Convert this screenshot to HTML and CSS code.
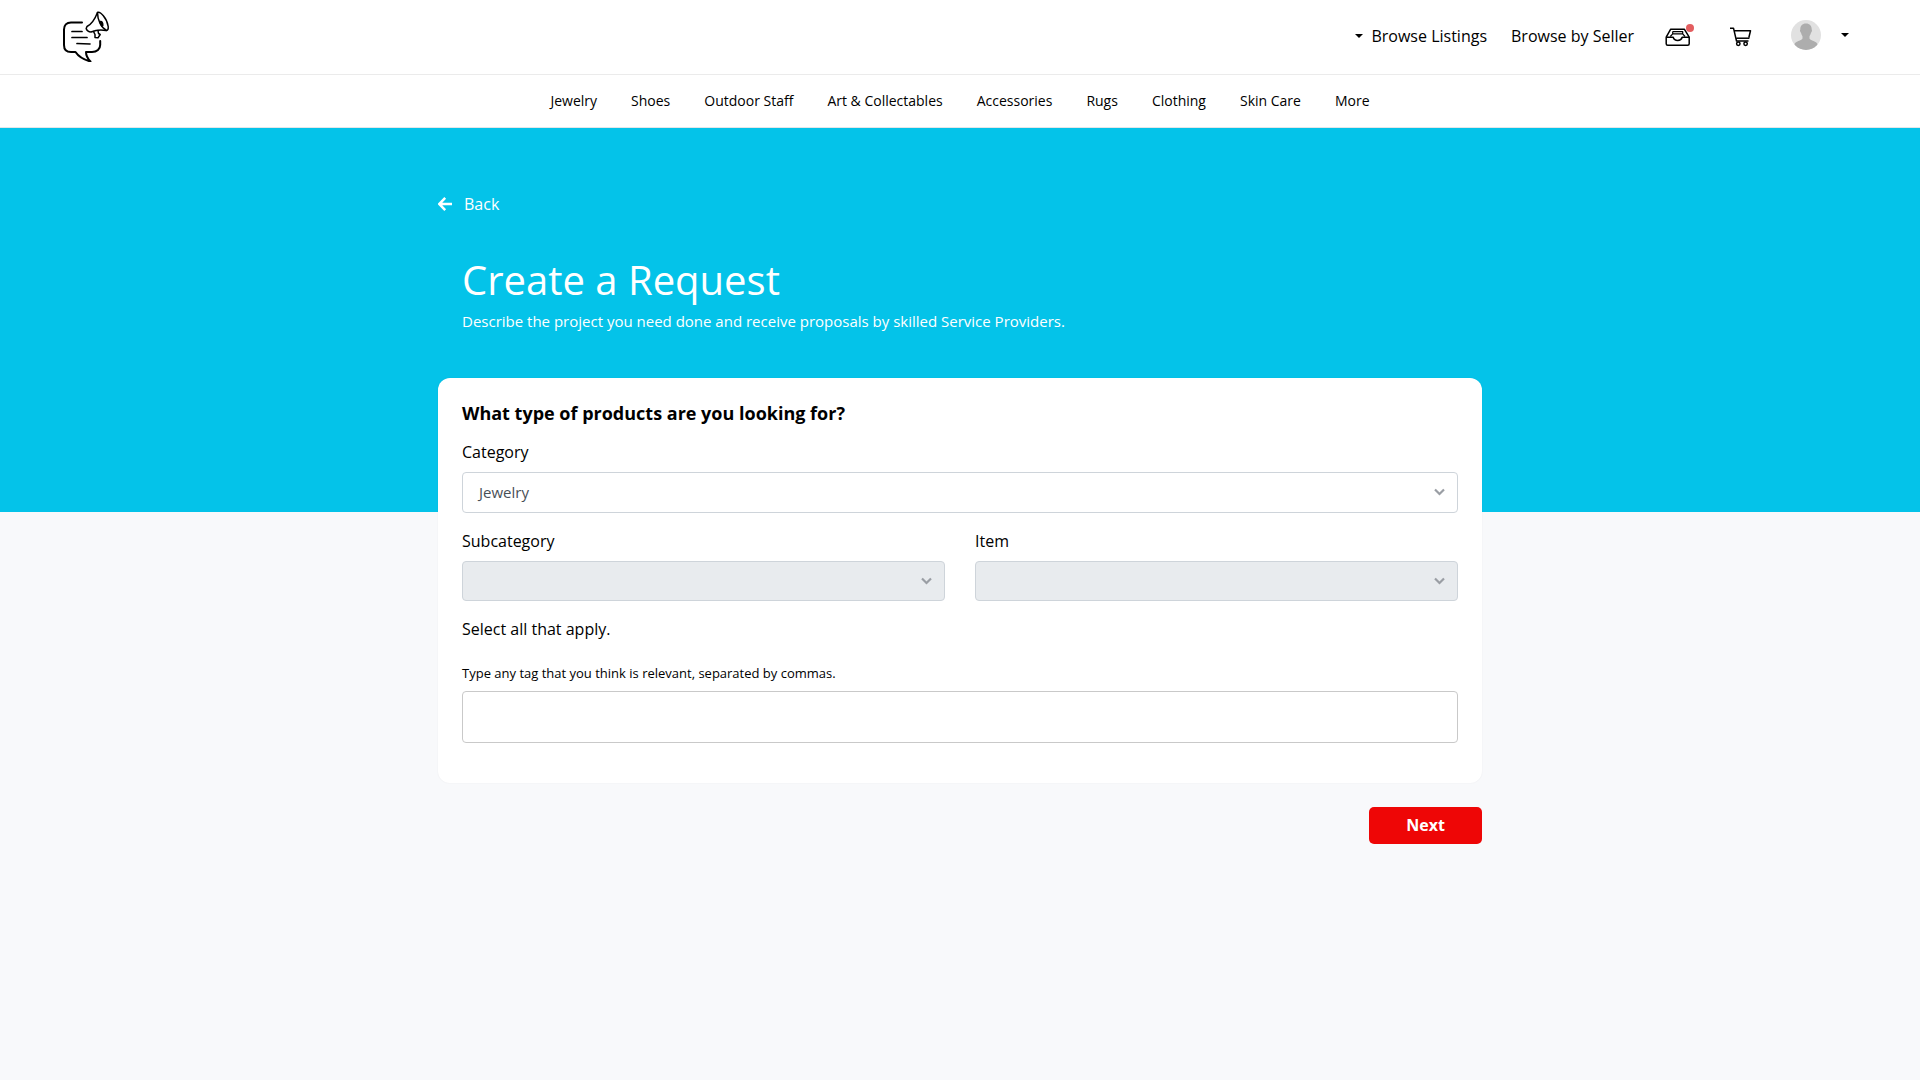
FILE: index.html
```html
<!DOCTYPE html>
<html lang="en">
<head>
<meta charset="utf-8">
<title>Create a Request</title>
<link rel="stylesheet" href="styles.css">
</head>
<body>
<header class="topbar">
  <a class="logo" aria-label="Home">
    <svg width="48" height="52" viewBox="0 0 48 52" fill="none" stroke="#000" stroke-linecap="round" stroke-linejoin="round">
      <path stroke-width="2" d="M20 12.500H9C4.500 12.500 2 15.500 2 19.500V35C2 39.500 4.500 42 9 42H13.500C16.500 46.500 21 49.500 28.500 51.500C25.500 48.500 24 45.500 24 42H30C35 42 38.200 39 38.200 35V31"/>
      <path stroke-width="1.700" d="M10 21.500H20M10 27.500H25M15 33.500L28 34"/>
      <path stroke-width="1.500" d="M25 16.500C29 14.500 33 9 35.500 2.500C38 1 45 8 46.200 16.500C46.500 19.500 45.500 20.500 44 20.500C39.500 19.500 35 19.500 29 22C26.500 22 24.500 20 24.200 18.500Z"/>
      <path stroke-width="1.500" d="M35.500 2.500C35.500 10 39 17.500 44.500 20.500M31.500 21.500L33 24.500L33 27.500L36 27.800L38.200 24.500L36.500 23.500L36 20.500"/>
      <path fill="#000" stroke="none" d="M37.500 11C40 10 42 12 41.500 16L39.500 17C38.500 15 37.500 13.500 37.500 11Z"/>
    </svg>
  </a>
  <div class="actions">
    <a class="link listings"><span class="caret"></span>Browse Listings</a>
    <a class="link seller">Browse by Seller</a>
    <a class="inbox" aria-label="Inbox">
      <svg width="26" height="19" viewBox="0 0 26 19" fill="none" stroke="#000" stroke-width="1.500" stroke-linejoin="round">
        <path d="M1.200 9.200L5.700 1.200H19.300L24.200 9.200V15.800Q24.200 17.300 22.700 17.300H2.700Q1.200 17.300 1.200 15.800Z"/>
        <path d="M1.200 9.200H8.200C8.800 11.200 10.500 12.400 12.700 12.400S16.600 11.200 17.200 9.200H24.200"/>
        <path stroke-width="1.200" d="M5.300 8.500L7.700 5.800H17.700L20 8.500M7.700 3.600H17.700V5.800M7.700 5.800V3.600"/>
      </svg>
      <span class="dot"></span>
    </a>
    <a class="cart" aria-label="Cart">
      <svg width="22" height="20" viewBox="0 0 22 20" fill="none" stroke="#000" stroke-width="1.500" stroke-linejoin="round">
        <path d="M0 1.200H3.500L6.500 14H18.500M4.200 3.700H20.500L18.700 11.200H6"/>
        <path stroke="#777" stroke-width="1" d="M6.500 10.600H18.500"/>
        <circle cx="8.300" cy="16.800" r="1.700"/><circle cx="15.600" cy="16.800" r="1.700"/>
      </svg>
    </a>
    <a class="account" aria-label="Account">
      <svg width="30" height="30" viewBox="0 0 30 30">
        <defs><clipPath id="round"><circle cx="15" cy="15" r="15"/></clipPath></defs>
        <g clip-path="url(#round)">
          <rect width="30" height="30" fill="#e1e1e1"/>
          <path fill="#adadad" d="M15 3.500C18.800 3.500 20.800 6 20.700 9.500C21.400 10 20.900 12.200 20 12.700C19.600 14.500 18.700 15.500 18.500 16.300V18.500C19 20.500 26 21 27 25V30H3V25C4 21 11 20.500 11.500 18.500V16.300C11.300 15.500 10.400 14.500 10 12.700C9.100 12.200 8.600 10 9.300 9.500C9.200 6 11.200 3.500 15 3.500Z"/>
        </g>
      </svg>
      <span class="caret"></span>
    </a>
  </div>
</header>
<nav class="categories">
  <a>Jewelry</a><a>Shoes</a><a>Outdoor Staff</a><a>Art &amp; Collectables</a><a>Accessories</a><a>Rugs</a><a>Clothing</a><a>Skin Care</a><a>More</a>
</nav>
<main>
  <section class="hero">
    <div class="container">
      <a class="back">
        <svg width="15" height="14" viewBox="0 0 15 14" fill="none" stroke="#fff" stroke-width="2.500"><path d="M7.200 .9L1.200 7L7.200 13.100M1.200 7H14"/></svg>
        Back
      </a>
      <h1>Create a Request</h1>
      <p class="lead">Describe the project you need done and receive proposals by skilled Service Providers.</p>
    </div>
  </section>
  <form class="container form">
    <div class="card">
      <h2>What type of products are you looking for?</h2>
      <label class="label">Category</label>
      <div class="select category">Jewelry
        <svg class="chevron" width="12" height="8" viewBox="0 0 12 8"><path d="M2 1.500L6.500 6L11 1.500"/></svg>
      </div>
      <div class="row">
        <div>
          <label class="label">Subcategory</label>
          <div class="select disabled">
            <svg class="chevron" width="12" height="8" viewBox="0 0 12 8"><path d="M2 1.500L6.500 6L11 1.500"/></svg>
          </div>
        </div>
        <div>
          <label class="label">Item</label>
          <div class="select disabled">
            <svg class="chevron" width="12" height="8" viewBox="0 0 12 8"><path d="M2 1.500L6.500 6L11 1.500"/></svg>
          </div>
        </div>
      </div>
      <p class="apply">Select all that apply.</p>
      <p class="hint">Type any tag that you think is relevant, separated by commas.</p>
      <input class="tags" type="text" aria-label="Tags">
    </div>
    <button class="next" type="button">Next</button>
  </form>
</main>
</body>
</html>
```
FILE: styles.css
```css
* { box-sizing: border-box; }
body {
  margin: 0;
  min-height: 1080px;
  background: #f8f9fb;
  color: #000;
  font: 16px/24px "Open Sans", sans-serif;
}
h1, h2, p { margin: 0; }
svg { display: block; }

.topbar {
  display: flex;
  justify-content: space-between;
  height: 75px;
  padding: 0 71px 0 62px;
  background: #fff;
  border-bottom: 1px solid #ebebeb;
}
.logo { padding-top: 10px; }
.actions { display: flex; align-items: center; height: 72px; }
.link { display: flex; align-items: center; white-space: nowrap; }
.caret {
  width: 0;
  border: 4px solid transparent;
  border-top-color: #000;
  border-bottom: 0;
}
.listings { gap: 8px; margin-right: 24px; }
.seller { margin-right: 31px; }
.inbox { position: relative; margin: 3px 39px 0 0; }
.dot {
  position: absolute;
  left: 21px;
  top: -4px;
  width: 8px;
  height: 8px;
  border-radius: 50%;
  background: #e35d5f;
}
.cart { margin: 2px 39px 0 0; }
.account { display: flex; align-items: center; gap: 20px; margin-top: -2px; }

.categories {
  display: flex;
  justify-content: center;
  align-items: center;
  gap: 34px;
  height: 53px;
  background: #fff;
  border-bottom: 1px solid #e3e6e8;
  font-size: 14px;
}

.container { width: 1044px; margin: 0 auto; }
.hero { height: 384px; padding-top: 64px; background: #04c3e9; color: #fff; }
.back { display: flex; align-items: center; gap: 11px; }
h1 { margin: 36px 0 0 24px; font-size: 40px; font-weight: 400; line-height: 56px; }
.lead { margin: 0 0 0 24px; padding-top: 1px; font-size: 15px; }

.form { margin-top: -134px; }
.card {
  height: 405px;
  padding: 23px 24px 0;
  border-radius: 12px;
  background: #fff;
  box-shadow: 0 0 2px rgba(0, 0, 0, .06);
}
h2 { font-size: 18px; font-weight: 700; line-height: 25px; }
.label { display: block; }
h2 + .label { margin: 14px 0 8px; }
.select {
  display: flex;
  align-items: center;
  justify-content: space-between;
  height: 41px;
  padding: 0 12px 1px 16px;
  border: 1px solid #ced4da;
  border-radius: 4px;
  color: #495057;
  font-size: 15px;
}
.chevron { margin-left: auto; fill: none; stroke: #9a9ea4; stroke-width: 2.200; }
.row { display: grid; grid-template-columns: 1fr 1fr; gap: 30px; margin-top: 16px; }
.row .label { margin-bottom: 8px; }
.disabled { height: 40px; background: #e8ebee; }
.apply { margin-top: 16px; }
.hint { margin: 20px 0 6px; font-size: 13px; }
.tags {
  display: block;
  width: 100%;
  height: 52px;
  border: 1px solid #c9c9c9;
  border-radius: 4px;
  background: #fff;
}
.next {
  display: block;
  width: 113px;
  height: 37px;
  margin: 24px 0 0 auto;
  padding: 0 0 2px;
  border: 0;
  border-radius: 5px;
  background: #ee0606;
  color: #fff;
  font: 700 16px/24px "Open Sans", sans-serif;
}
```
